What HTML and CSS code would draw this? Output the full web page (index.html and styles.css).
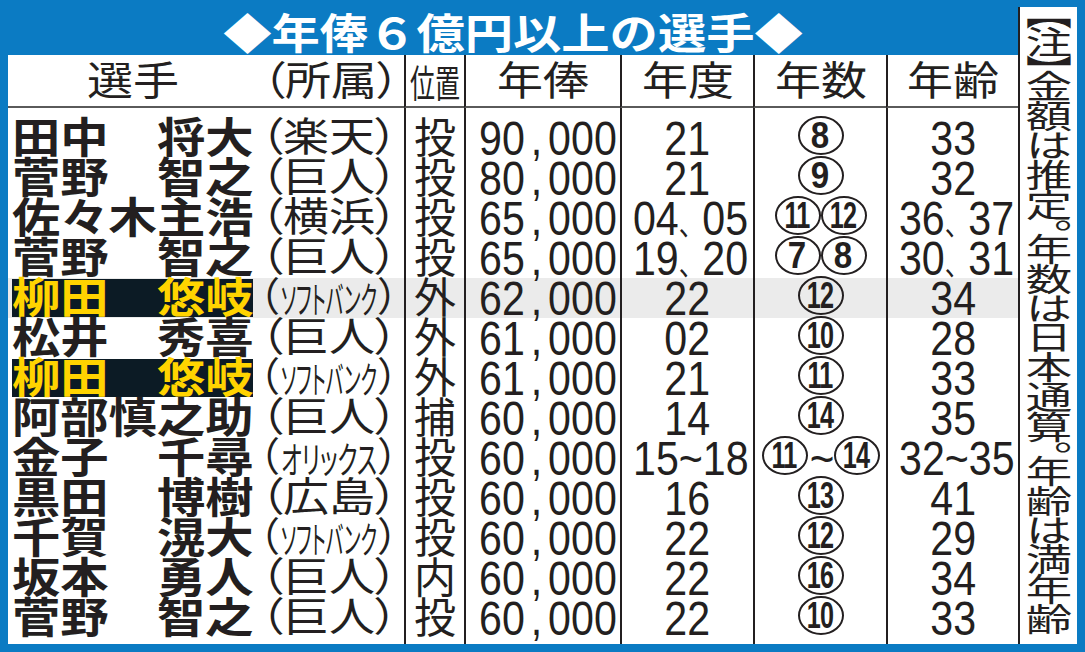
FILE: index.html
```html
<!DOCTYPE html>
<html lang="ja">
<head>
<meta charset="utf-8">
<title>年俸6億円以上の選手</title>
<link rel="stylesheet" href="styles.css">
</head>
<body>
<div class="page">
  <div class="main">
    <h1 class="title"><span class="sx">◆年俸６億円以上の選手◆</span></h1>
    <table class="tbl">
      <colgroup>
        <col class="c-name"><col class="c-pos"><col class="c-sal"><col class="c-yr"><col class="c-cnt"><col class="c-age">
      </colgroup>
      <thead>
        <tr class="hr">
          <th><div class="hn"><span class="hp"><span class="sx">選手</span></span><span class="ht"><span class="sx">（所属）</span></span></div></th>
          <th><svg class="posh" width="50" height="46" viewBox="0 0 50 46"><text x="0" y="42" textLength="50" lengthAdjust="spacingAndGlyphs">位置</text></svg></th>
          <th><span class="sx">年俸</span></th>
          <th><span class="sx">年度</span></th>
          <th><span class="sx">年数</span></th>
          <th><span class="sx">年齢</span></th>
        </tr>
      </thead>
      <tbody>
        <tr class="sp"><td></td><td></td><td></td><td></td><td></td><td></td></tr>
        <tr>
          <td><div class="nc"><span class="nm"><span class="sx">田中　将大</span></span><span class="tm"><span class="sx">（楽天）</span></span></div></td>
          <td class="ps">投</td>
          <td class="n"><span class="d">90<span class="cm">,</span>000</span></td>
          <td class="n"><span class="d">21</span></td>
          <td class="n"><span class="c"><span>8</span></span></td>
          <td class="n"><span class="d">33</span></td>
        </tr>
        <tr>
          <td><div class="nc"><span class="nm"><span class="sx">菅野　智之</span></span><span class="tm"><span class="sx">（巨人）</span></span></div></td>
          <td class="ps">投</td>
          <td class="n"><span class="d">80<span class="cm">,</span>000</span></td>
          <td class="n"><span class="d">21</span></td>
          <td class="n"><span class="c"><span>9</span></span></td>
          <td class="n"><span class="d">32</span></td>
        </tr>
        <tr>
          <td><div class="nc"><span class="nm"><span class="sx">佐々木主浩</span></span><span class="tm"><span class="sx">（横浜）</span></span></div></td>
          <td class="ps">投</td>
          <td class="n"><span class="d">65<span class="cm">,</span>000</span></td>
          <td class="n"><span class="d">04<span class="ic">、</span>05</span></td>
          <td class="n"><span class="c c2"><span>11</span></span><span class="c c2"><span>12</span></span></td>
          <td class="n"><span class="d">36<span class="ic">、</span>37</span></td>
        </tr>
        <tr>
          <td><div class="nc"><span class="nm"><span class="sx">菅野　智之</span></span><span class="tm"><span class="sx">（巨人）</span></span></div></td>
          <td class="ps">投</td>
          <td class="n"><span class="d">65<span class="cm">,</span>000</span></td>
          <td class="n"><span class="d">19<span class="ic">、</span>20</span></td>
          <td class="n"><span class="c"><span>7</span></span><span class="c"><span>8</span></span></td>
          <td class="n"><span class="d">30<span class="ic">、</span>31</span></td>
        </tr>
        <tr class="gray">
          <td><div class="nc"><span class="nm hl"><span class="sx">柳田　悠岐</span></span><span class="tm"><span class="pr">（</span><svg class="kt" width="96" height="40" viewBox="0 0 96 40"><text x="0" y="36" textLength="96" lengthAdjust="spacingAndGlyphs">ソフトバンク</text></svg><span class="pr">）</span></span></div></td>
          <td class="ps">外</td>
          <td class="n"><span class="d">62<span class="cm">,</span>000</span></td>
          <td class="n"><span class="d">22</span></td>
          <td class="n"><span class="c c2"><span>12</span></span></td>
          <td class="n"><span class="d">34</span></td>
        </tr>
        <tr>
          <td><div class="nc"><span class="nm"><span class="sx">松井　秀喜</span></span><span class="tm"><span class="sx">（巨人）</span></span></div></td>
          <td class="ps">外</td>
          <td class="n"><span class="d">61<span class="cm">,</span>000</span></td>
          <td class="n"><span class="d">02</span></td>
          <td class="n"><span class="c c2"><span>10</span></span></td>
          <td class="n"><span class="d">28</span></td>
        </tr>
        <tr>
          <td><div class="nc"><span class="nm hl"><span class="sx">柳田　悠岐</span></span><span class="tm"><span class="pr">（</span><svg class="kt" width="96" height="40" viewBox="0 0 96 40"><text x="0" y="36" textLength="96" lengthAdjust="spacingAndGlyphs">ソフトバンク</text></svg><span class="pr">）</span></span></div></td>
          <td class="ps">外</td>
          <td class="n"><span class="d">61<span class="cm">,</span>000</span></td>
          <td class="n"><span class="d">21</span></td>
          <td class="n"><span class="c c2"><span>11</span></span></td>
          <td class="n"><span class="d">33</span></td>
        </tr>
        <tr>
          <td><div class="nc"><span class="nm"><span class="sx">阿部慎之助</span></span><span class="tm"><span class="sx">（巨人）</span></span></div></td>
          <td class="ps">捕</td>
          <td class="n"><span class="d">60<span class="cm">,</span>000</span></td>
          <td class="n"><span class="d">14</span></td>
          <td class="n"><span class="c c2"><span>14</span></span></td>
          <td class="n"><span class="d">35</span></td>
        </tr>
        <tr>
          <td><div class="nc"><span class="nm"><span class="sx">金子　千尋</span></span><span class="tm"><span class="pr">（</span><svg class="kt" width="96" height="40" viewBox="0 0 96 40"><text x="0" y="36" textLength="96" lengthAdjust="spacingAndGlyphs">オリックス</text></svg><span class="pr">）</span></span></div></td>
          <td class="ps">投</td>
          <td class="n"><span class="d">60<span class="cm">,</span>000</span></td>
          <td class="n"><span class="d">15~18</span></td>
          <td class="n"><span class="c c2"><span>11</span></span><span class="tl">~</span><span class="c c2"><span>14</span></span></td>
          <td class="n"><span class="d">32~35</span></td>
        </tr>
        <tr>
          <td><div class="nc"><span class="nm"><span class="sx">黒田　博樹</span></span><span class="tm"><span class="sx">（広島）</span></span></div></td>
          <td class="ps">投</td>
          <td class="n"><span class="d">60<span class="cm">,</span>000</span></td>
          <td class="n"><span class="d">16</span></td>
          <td class="n"><span class="c c2"><span>13</span></span></td>
          <td class="n"><span class="d">41</span></td>
        </tr>
        <tr>
          <td><div class="nc"><span class="nm"><span class="sx">千賀　滉大</span></span><span class="tm"><span class="pr">（</span><svg class="kt" width="96" height="40" viewBox="0 0 96 40"><text x="0" y="36" textLength="96" lengthAdjust="spacingAndGlyphs">ソフトバンク</text></svg><span class="pr">）</span></span></div></td>
          <td class="ps">投</td>
          <td class="n"><span class="d">60<span class="cm">,</span>000</span></td>
          <td class="n"><span class="d">22</span></td>
          <td class="n"><span class="c c2"><span>12</span></span></td>
          <td class="n"><span class="d">29</span></td>
        </tr>
        <tr>
          <td><div class="nc"><span class="nm"><span class="sx">坂本　勇人</span></span><span class="tm"><span class="sx">（巨人）</span></span></div></td>
          <td class="ps">内</td>
          <td class="n"><span class="d">60<span class="cm">,</span>000</span></td>
          <td class="n"><span class="d">22</span></td>
          <td class="n"><span class="c c2"><span>16</span></span></td>
          <td class="n"><span class="d">34</span></td>
        </tr>
        <tr>
          <td><div class="nc"><span class="nm"><span class="sx">菅野　智之</span></span><span class="tm"><span class="sx">（巨人）</span></span></div></td>
          <td class="ps">投</td>
          <td class="n"><span class="d">60<span class="cm">,</span>000</span></td>
          <td class="n"><span class="d">22</span></td>
          <td class="n"><span class="c c2"><span>10</span></span></td>
          <td class="n"><span class="d">33</span></td>
        </tr>
        <tr class="sp sp-b"><td></td><td></td><td></td><td></td><td></td><td></td></tr>
      </tbody>
    </table>
  </div>
  <aside class="note"><p>【注】金額は推定。年数は日本通算。年齢は満年齢</p></aside>
</div>
</body>
</html>
```

FILE: styles.css
```css
* { box-sizing: border-box; margin: 0; padding: 0; }

html, body {
  width: 1085px;
  height: 652px;
  overflow: hidden;
}

body {
  background: #0b7bc3;
  font-family: "Noto Sans CJK JP", "Noto Sans", sans-serif;
  color: #231f20;
}

.page {
  display: flex;
  height: 652px;
  padding: 0 8px 8px 8px;
}

.main {
  width: 1010px;
  display: flex;
  flex-direction: column;
}

.sx {
  display: inline-block;
  transform: scaleX(1.15);
}

/* title */
.title {
  height: 55px;
  padding-top: 6px;
  text-align: center;
  color: #fff;
  font-size: 42px;
  font-weight: 700;
  line-height: 49px;
  white-space: nowrap;
}

/* table */
.tbl {
  width: 1010px;
  background: #fff;
  border-collapse: separate;
  border-spacing: 0;
  table-layout: fixed;
}

.c-name { width: 396px; }
.c-pos { width: 60px; }
.c-sal { width: 156px; }
.c-yr { width: 133px; }
.c-cnt { width: 133px; }
.c-age { width: 132px; }

.tbl th,
.tbl td {
  padding: 0;
  vertical-align: top;
  white-space: nowrap;
  text-align: center;
}

.tbl th + th,
.tbl td + td {
  border-left: 2px solid #231f20;
}

.hr { height: 53px; }

.tbl th {
  border-bottom: 2px solid #5a5a5a;
  font-size: 40px;
  font-weight: 400;
  line-height: 46px;
}

.hn {
  display: flex;
}

.hp {
  width: 250px;
  text-align: center;
}

.ht {
  flex: 1;
  text-align: center;
  font-feature-settings: "palt";
}

.posh {
  display: inline-block;
  vertical-align: top;
  overflow: visible;
}

.posh text {
  font-family: "Noto Sans CJK JP", sans-serif;
  font-size: 38px;
  fill: #231f20;
}

.tbl tbody tr { height: 40px; }
.tbl tbody tr.sp { height: 10px; }
.tbl tbody tr.sp-b { height: 6px; }

.gray td { background: #ebebeb; }

/* name cell */
.nc {
  display: flex;
  height: 40px;
  padding-left: 4px;
}

.nm {
  display: inline-block;
  width: 241px;
  height: 38px;
  margin-top: 1px;
  text-align: left;
  font-size: 42px;
  font-weight: 700;
  line-height: 32px;
}

.nm .sx {
  transform-origin: left center;
}

.nm.hl {
  background: #0c1b25;
  color: #ffd400;
}

.tm {
  flex: 1;
  text-align: center;
  font-size: 40px;
  line-height: 33px;
  font-weight: 400;
  font-feature-settings: "palt";
}

.pr {
  display: inline-block;
  padding: 0 2px;
}

.kt {
  display: inline-block;
  vertical-align: top;
  overflow: visible;
}

.kt text {
  font-family: "Noto Sans CJK JP", sans-serif;
  font-size: 37px;
  fill: #231f20;
}

/* position */
.ps {
  font-size: 42px;
  line-height: 33px;
}

/* numbers */
.n {
  font-family: "Liberation Sans", Arial, sans-serif;
  font-size: 49px;
  line-height: 40px;
}

.d {
  display: inline-block;
  transform: scaleX(0.84);
}

.cm {
  padding: 0 7px;
}

.ic {
  font-family: "Noto Sans CJK JP", sans-serif;
  font-size: 30px;
  display: inline-block;
  width: 28px;
  line-height: 30px;
}

.c {
  display: inline-flex;
  align-items: center;
  justify-content: center;
  width: 46px;
  height: 39px;
  margin-top: -2px;
  border: 2px solid #231f20;
  border-radius: 50%;
  vertical-align: top;
  font-size: 36px;
  font-weight: 700;
  line-height: 36px;
}

.c span {
  display: inline-block;
  transform: scaleX(0.92);
}

.c2 span {
  transform: scaleX(0.7);
  letter-spacing: -1px;
}

.tl {
  display: inline-block;
  width: 26px;
  vertical-align: top;
  transform: scaleX(0.86);
}

/* note */
.note {
  width: 59px;
  height: 637px;
  margin-top: 7px;
  background: #fff;
  border-left: 2px solid #231f20;
  display: flex;
  justify-content: center;
  padding-top: 5px;
}

.note p {
  writing-mode: vertical-rl;
  white-space: nowrap;
  font-size: 32px;
  line-height: 56px;
  letter-spacing: -2px;
  font-feature-settings: "vpal";
  transform: scaleX(1.45);
  color: #231f20;
}
```
